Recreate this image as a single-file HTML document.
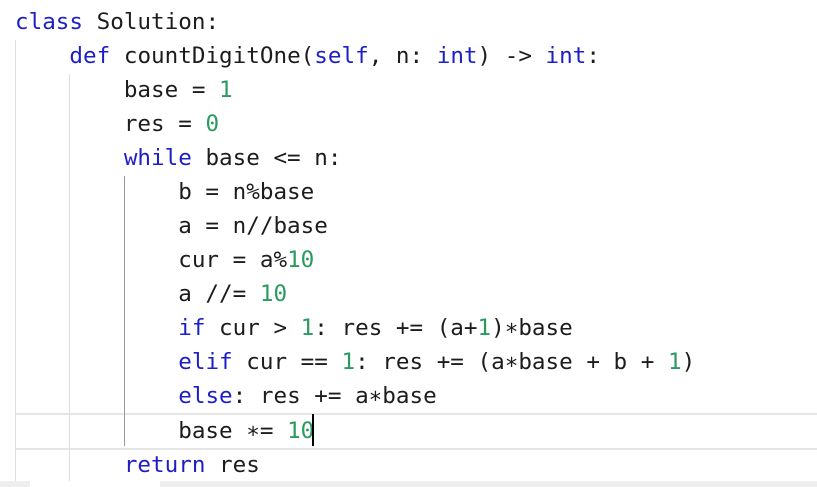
<!DOCTYPE html>
<html><head><style>
body{margin:0;width:817px;height:487px;background:#fff;overflow:hidden;position:relative;font-family:"DejaVu Sans Mono","Liberation Mono",monospace;font-size:22.6px;color:#1c1c1c}
.l{position:absolute;left:15px;height:34px;line-height:34px;white-space:pre}
.k{color:#1e1ec8}.n{color:#2a9a5e}
.g{position:absolute;width:1px;background:#ddd}
</style></head><body>
<div style="position:absolute;left:15px;right:0;top:413px;height:33px;border-top:2px solid #e6e6e6;border-bottom:2px solid #e6e6e6"></div>
<div class="g" style="left:15px;top:40px;height:441px"></div>
<div class="g" style="left:69px;top:74px;height:407px"></div>
<div class="g" style="left:124px;top:176px;height:270px;background:#999"></div>
<div class="l" style="top:5px"><span class="k">class</span> Solution:</div>
<div class="l" style="top:39px">    <span class="k">def</span> countDigitOne(<span class="k">self</span>, n: <span class="k">int</span>) -&gt; <span class="k">int</span>:</div>
<div class="l" style="top:73px">        base = <span class="n">1</span></div>
<div class="l" style="top:107px">        res = <span class="n">0</span></div>
<div class="l" style="top:141px">        <span class="k">while</span> base &lt;= n:</div>
<div class="l" style="top:175px">            b = n%base</div>
<div class="l" style="top:209px">            a = n//base</div>
<div class="l" style="top:243px">            cur = a%<span class="n">10</span></div>
<div class="l" style="top:277px">            a //= <span class="n">10</span></div>
<div class="l" style="top:311px">            <span class="k">if</span> cur &gt; <span class="n">1</span>: res += (a+<span class="n">1</span>)∗base</div>
<div class="l" style="top:345px">            <span class="k">elif</span> cur == <span class="n">1</span>: res += (a∗base + b + <span class="n">1</span>)</div>
<div class="l" style="top:379px">            <span class="k">else</span>: res += a∗base</div>
<div class="l" style="top:414px">            base ∗= <span class="n">10</span></div>
<div style="position:absolute;left:312px;top:414px;width:2px;height:32px;background:#000"></div>
<div class="l" style="top:448px">        <span class="k">return</span> res</div>
<div style="position:absolute;left:0;right:0;top:481px;height:6px;background:#eee"></div>
<div style="position:absolute;left:30px;width:130px;top:481px;height:6px;background:#fff"></div>
</body></html>
